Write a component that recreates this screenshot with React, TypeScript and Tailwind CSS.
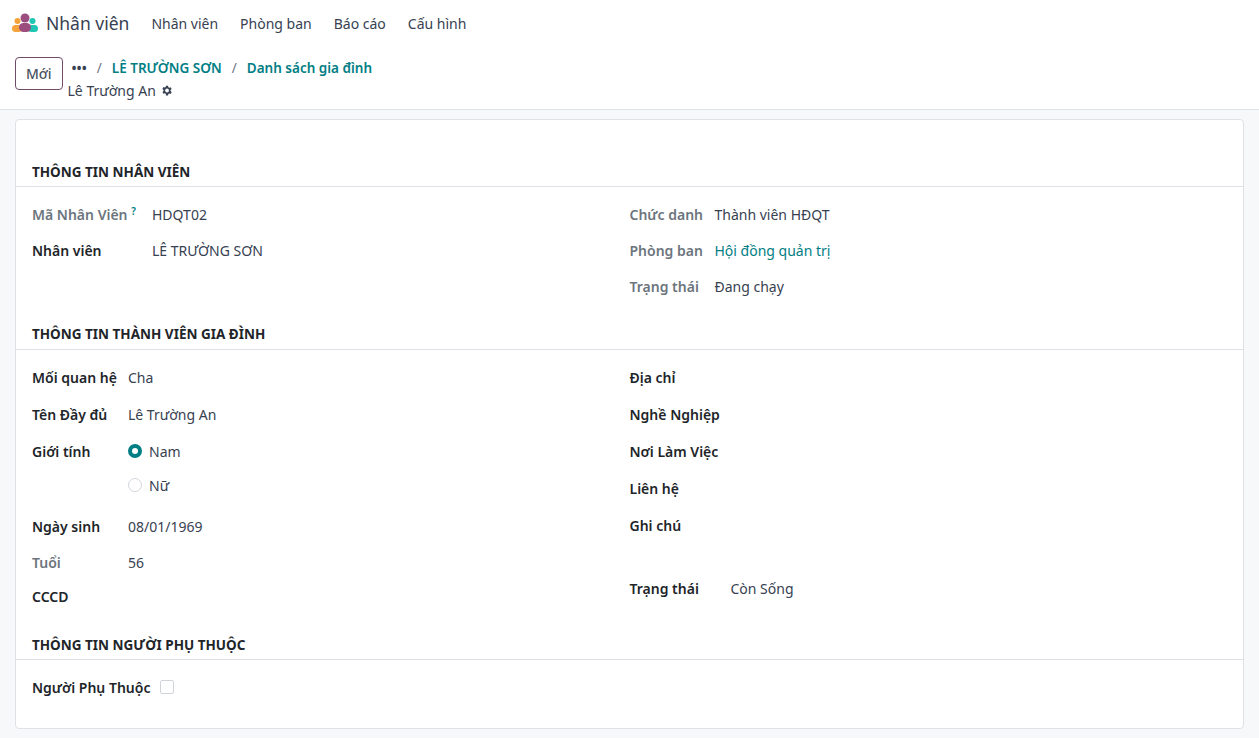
import React from "react";

const F = { fontFamily: '"Noto Sans", "Open Sans", sans-serif' };

function Row({ label, value, muted, lw, children, h = "h-[36px]", link }: any) {
  return (
    <div className={`flex ${h} items-start`}>
      <div className={`${lw} shrink-0 font-semibold ${muted ? "text-[#6c757d]" : "text-[#212529]"}`}>{label}</div>
      <div className={link ? "text-[#017e84]" : "text-[#374151]"}>{value}{children}</div>
    </div>
  );
}

function Heading({ t }: { t: string }) {
  return (
    <div className="border-b border-[#dee2e6] px-4 pb-[4px] text-[13.5px] font-bold text-[#212529]">{t}</div>
  );
}

export default function App() {
  return (
    <div style={F} className="w-[1259px] h-[738px] bg-[#f7f8f9] text-[14px] text-[#374151] overflow-hidden">
      <div className="bg-white h-[46px] flex items-center px-[12px] gap-[22px]">
        <div className="flex items-center gap-[8px]">
          <svg width="26" height="20" viewBox="0 0 26 20">
            <circle cx="13" cy="5" r="4.5" fill="#9b4d7e" />
            <circle cx="5.5" cy="8" r="3" fill="#f5a33a" />
            <circle cx="20.5" cy="8" r="3" fill="#1fc6b3" />
            <rect x="0" y="12" width="10" height="7" rx="3.5" fill="#f5a33a" />
            <rect x="16" y="12" width="10" height="7" rx="3.5" fill="#1fc6b3" />
            <rect x="7" y="10" width="12" height="9" rx="4.5" fill="#9b4d7e" />
          </svg>
          <span className="text-[17.5px] text-[#374151]">Nhân viên</span>
        </div>
        <span>Nhân viên</span>
        <span>Phòng ban</span>
        <span>Báo cáo</span>
        <span>Cấu hình</span>
      </div>
      <div className="bg-white h-[64px] border-b border-[#dee2e6] flex items-start px-[15px] pt-[11px] gap-[5px]">
        <button className="h-[33px] px-[10px] border border-[#714b67] rounded-[4px] text-[#4b5563] font-medium">Mới</button>
        <div className="flex flex-col">
          <div className="flex items-center gap-[10px] text-[13.5px] font-semibold h-[22px]">
            <span className="text-[#374151] ml-[4px]">•••</span>
            <span className="text-[#6b7280] font-normal">/</span>
            <span className="text-[#017e84]">LÊ TRƯỜNG SƠN</span>
            <span className="text-[#6b7280] font-normal">/</span>
            <span className="text-[#017e84]">Danh sách gia đình</span>
          </div>
          <div className="flex items-center gap-[4px] h-[22px] text-[#374151]">
            Lê Trường An
            <svg width="13" height="13" viewBox="0 0 24 24" fill="#374151"><path d="M19.4 13a7.5 7.5 0 000-2l2.1-1.6-2-3.5-2.5 1a7.6 7.6 0 00-1.7-1L15 3h-4l-.4 2.6a7.6 7.6 0 00-1.7 1l-2.5-1-2 3.5L6.6 11a7.5 7.5 0 000 2l-2.1 1.6 2 3.5 2.5-1a7.6 7.6 0 001.7 1L11 21h4l.4-2.6a7.6 7.6 0 001.7-1l2.5 1 2-3.5zM13 15.5a3.5 3.5 0 110-7 3.5 3.5 0 010 7z" /></svg>
          </div>
        </div>
      </div>
      <div className="px-[15px] pt-[9px]">
        <div className="bg-white border border-[#dee2e6] rounded-[4px] h-[610px] pt-[42px]">
          <Heading t="THÔNG TIN NHÂN VIÊN" />
          <div className="grid grid-cols-2 px-4 pt-[17px]">
            <div>
              <Row lw="w-[120px]" muted label={<>Mã Nhân Viên <sup className="text-[#017e84] text-[10px]">?</sup></>} value="HDQT02" />
              <Row lw="w-[120px]" label="Nhân viên" value="LÊ TRƯỜNG SƠN" />
            </div>
            <div className="pl-[0px]">
              <Row lw="w-[85px]" muted label="Chức danh" value="Thành viên HĐQT" />
              <Row lw="w-[85px]" muted label="Phòng ban" value="Hội đồng quản trị" link />
              <Row lw="w-[85px]" muted label="Trạng thái" value="Đang chạy" />
            </div>
          </div>
          <div className="pt-[12px]"><Heading t="THÔNG TIN THÀNH VIÊN GIA ĐÌNH" /></div>
          <div className="grid grid-cols-2 px-4 pt-[17px]">
            <div>
              <Row lw="w-[96px]" label="Mối quan hệ" value="Cha" h="h-[37px]" />
              <Row lw="w-[96px]" label="Tên Đầy đủ" value="Lê Trường An" h="h-[37px]" />
              <div className="flex h-[75px]">
                <div className="w-[96px] font-semibold text-[#212529]">Giới tính</div>
                <div className="flex flex-col gap-[13px]">
                  <div className="flex items-center gap-[7px]"><span className="w-[14px] h-[14px] rounded-full border-[4px] border-[#017e84]" />Nam</div>
                  <div className="flex items-center gap-[7px]"><span className="w-[14px] h-[14px] rounded-full border border-[#d1d5db]" />Nữ</div>
                </div>
              </div>
              <Row lw="w-[96px]" label="Ngày sinh" value="08/01/1969" h="h-[36px]" />
              <Row lw="w-[96px]" muted label="Tuổi" value="56" h="h-[34px]" />
              <Row lw="w-[96px]" label="CCCD" value="" h="h-[36px]" />
            </div>
            <div>
              <Row lw="w-[101px]" label="Địa chỉ" value="" h="h-[37px]" />
              <Row lw="w-[101px]" label="Nghề Nghiệp" value="" h="h-[37px]" />
              <Row lw="w-[101px]" label="Nơi Làm Việc" value="" h="h-[37px]" />
              <Row lw="w-[101px]" label="Liên hệ" value="" h="h-[37px]" />
              <Row lw="w-[101px]" label="Ghi chú" value="" h="h-[63px]" />
              <Row lw="w-[101px]" label="Trạng thái" value="Còn Sống" h="h-[36px]" />
            </div>
          </div>
          <div className="pt-[13px]"><Heading t="THÔNG TIN NGƯỜI PHỤ THUỘC" /></div>
          <div className="px-4 pt-[17px] flex items-center">
            <div className="w-[128px] font-semibold text-[#212529]">Người Phụ Thuộc</div>
            <span className="w-[14px] h-[14px] border border-[#d1d5db] rounded-[2px]" />
          </div>
        </div>
      </div>
    </div>
  );
}
